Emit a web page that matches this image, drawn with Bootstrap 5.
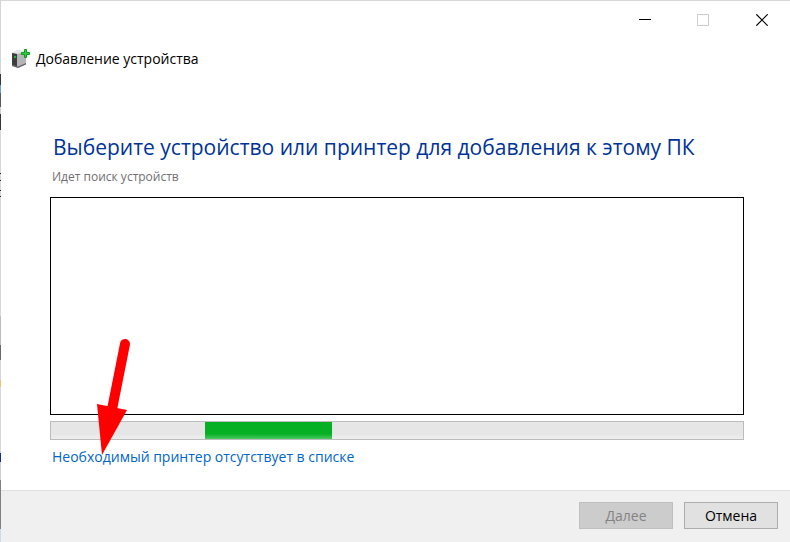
<!DOCTYPE html>
<html lang="ru">
<head>
<meta charset="utf-8">
<meta name="viewport" content="width=device-width, initial-scale=1">
<title>Добавление устройства</title>
<link href="https://cdn.jsdelivr.net/npm/bootstrap@5.3.0/dist/css/bootstrap.min.css" rel="stylesheet">
<style>
body{font-family:"Segoe UI","Open Sans","Noto Sans",sans-serif;font-size:14px;line-height:20px;color:#000;
  background:linear-gradient(#d6d6d6 0 74px,#33363b 74px 85px,#6c9ade 85px 93px,#55585c 93px 107px,#d0d0d0 107px 114px,#33363b 114px 130px,#d8d8d8 130px 173px,#222 173px 174px,#d8d8d8 174px 180px,#222 180px 181px,#d8d8d8 181px 190px,#222 190px 191px,#d8d8d8 191px 196px,#222 196px 197px,#d8d8d8 197px 316px,#bcbcbc 316px 345px,#6a6a6a 345px 360px,#d8d8d8 360px 380px,#e6c46a 380px 387px,#d8d8d8 387px 453px,#1c2a8c 453px 462px,#d0d0d0 462px 480px,#808080 480px 529px,#cfdbe6 529px) #fff}
.dialog-window{margin-left:1px;border-top:1px solid #d8d8d8;background:#fff}
.caption-btn{width:58px;height:38px;background:none}
.caption-btn svg{display:block;margin:0 auto}
.dialog-title{padding:9px 9px 0;gap:6px;line-height:22px}
.dialog-body{padding:62px 46px 23px 49px}
.dialog-heading{font-size:21px;line-height:30px;color:#003399;padding-left:3px}
.dialog-status{font-size:12px;line-height:16px;color:#707070;padding-left:2px;margin:7px 0 12px}
.device-list{min-height:218px;border:1px solid #000}
.search-progress{height:19px;margin-top:6px;border:1px solid #bcbcbc;border-radius:0;background:linear-gradient(#e6e6e6 70%,#efefef)}
.search-space{width:22.3%}
.search-chunk{width:18.3%;background:linear-gradient(#06b025 70%,#4cc962)}
.missing-link{color:#0066cc;padding-left:2px;margin-top:7px}
.dialog-footer{background:#f0f0f0;border-top:1px solid #dfdfdf;padding:11px 12px 13px;gap:11px}
.dialog-btn{width:94px;height:27px;padding:0;font-size:14px;line-height:24px;border:1px solid #adadad;border-radius:0;background:#e1e1e1;color:#000}
.dialog-btn:disabled{background:#ccc;border-color:#bfbfbf;color:#838383;opacity:1}
.pointer-arrow{left:95px;top:336px;pointer-events:none}
</style>
<script src="https://cdn.jsdelivr.net/npm/bootstrap@5.3.0/dist/js/bootstrap.bundle.min.js"></script>
</head>
<body>
<main class="dialog-window d-flex flex-column min-vh-100 position-relative">
  <div class="d-flex justify-content-end">
    <button type="button" class="caption-btn border-0 p-0" aria-label="Свернуть"><svg width="12" height="12" shape-rendering="crispEdges"><path d="M0 5.500h12" stroke="#000"/></svg></button>
    <button type="button" class="caption-btn border-0 p-0" aria-label="Развернуть" disabled><svg width="12" height="12"><path d="M.5.500h11v11H.5z" fill="none" stroke="#ccc"/></svg></button>
    <button type="button" class="caption-btn border-0 p-0" aria-label="Закрыть"><svg width="14" height="12"><path d="M2.300.300l11.400 11.400M13.700.300L2.300 11.700" stroke="#000" stroke-width="1.200"/></svg></button>
  </div>
  <header class="dialog-title d-flex align-items-center">
    <svg width="20" height="20" viewBox="0 0 20 20" aria-hidden="true">
      <path d="M2 4l6-3 8 2v12l-8 4-6-2z" fill="#bfc0c2"/>
      <path d="M2 4l6-3 8 2-8 2z" fill="#e4e5e6"/>
      <path d="M2 4l5 1v13l-5-2z" fill="#3b3d3f"/>
      <path d="M7 5l9-2v12l-8 3.500H7z" fill="#b4b5b8"/>
      <path d="M2 15.500l6 2 8-3.500V15.500L8 19l-6-2z" fill="#66686b"/>
      <path d="M4 7h2v2H4z" fill="#20b52a"/>
      <path d="M14.500.500h2v3h3v2h-3v3h-2v-3h-3v-2h3z" fill="#2fd03a" stroke="#0c9a1c"/>
    </svg>
    <span>Добавление устройства</span>
  </header>
  <section class="dialog-body flex-grow-1 d-flex flex-column">
    <h1 class="dialog-heading fw-normal mb-0">Выберите устройство или принтер для добавления к этому ПК</h1>
    <p class="dialog-status">Идет поиск устройств</p>
    <div class="device-list flex-grow-1" role="listbox" aria-label="Устройства"></div>
    <div class="search-progress progress" role="progressbar" aria-label="Поиск устройств">
      <div class="search-space"></div>
      <div class="search-chunk"></div>
    </div>
    <a href="#" class="missing-link text-decoration-none align-self-start">Необходимый принтер отсутствует в списке</a>
  </section>
  <footer class="dialog-footer d-flex justify-content-end">
    <button type="button" class="btn dialog-btn" disabled>Далее</button>
    <button type="button" class="btn dialog-btn">Отмена</button>
  </footer>
  <svg class="pointer-arrow position-absolute" width="36" height="120" viewBox="0 0 36 120" aria-hidden="true">
    <path d="M29 7L15.500 75" stroke="#f00" stroke-width="10" stroke-linecap="round"/>
    <path d="M1 67l30 6L6 118z" fill="#f00"/>
  </svg>
</main>
</body>
</html>
